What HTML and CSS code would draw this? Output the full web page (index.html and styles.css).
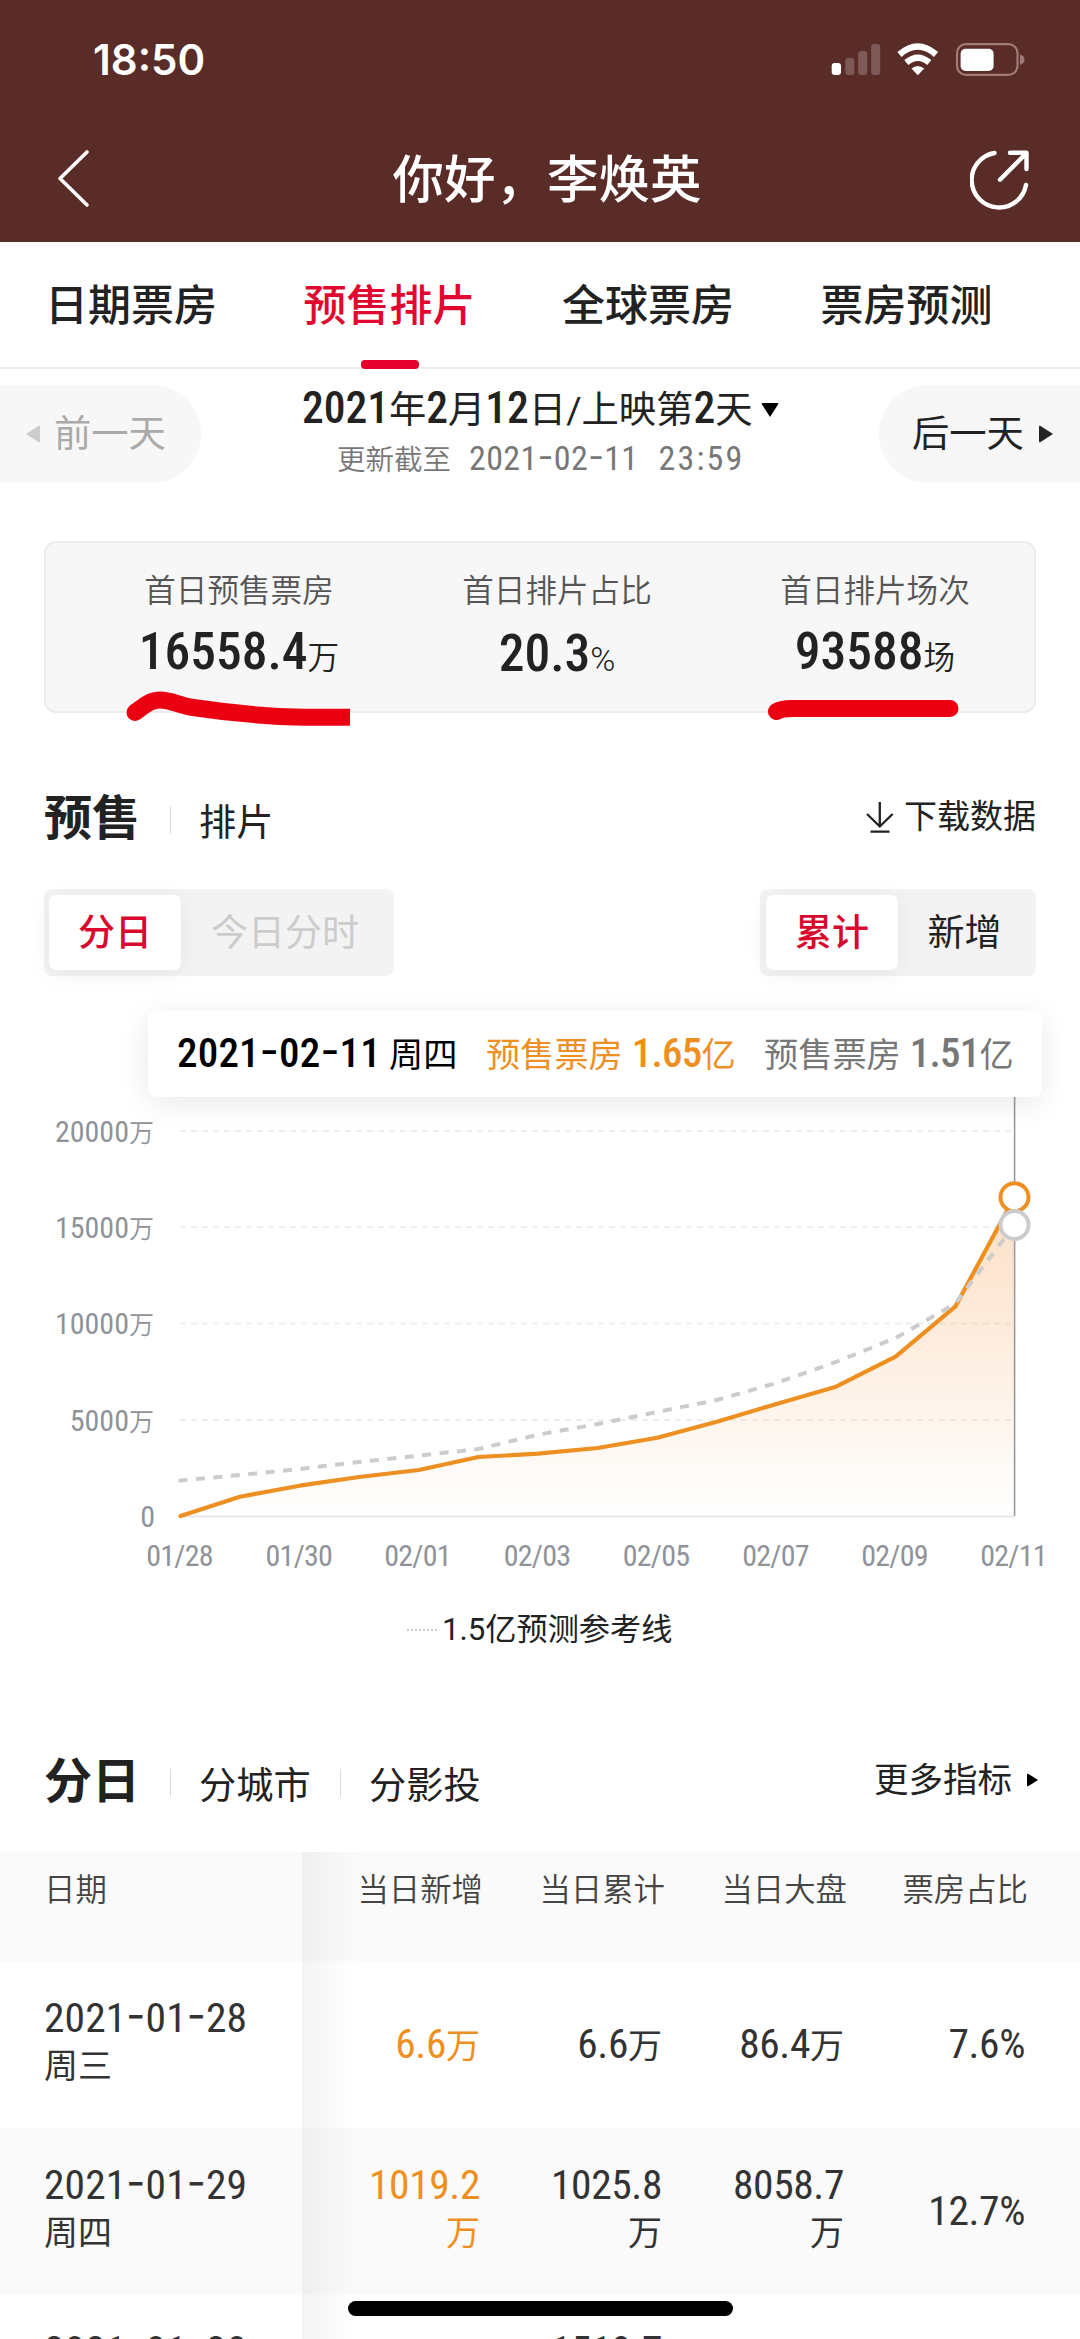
FILE: index.html
```
<!DOCTYPE html>
<html lang="zh-CN">
<head>
<meta charset="utf-8">
<title>你好，李焕英</title>
<link rel="stylesheet" href="styles.css">
</head>
<body>
<header class="top">
  <div class="status">
    <span class="clock">18:50</span>
    <svg class="status-icons" width="196" height="36" viewBox="830 40 196 36">
      <rect x="831.7" y="62" width="9.3" height="12" rx="3" fill="#fff"/>
      <g fill="#fff" opacity=".22">
        <rect x="845.3" y="57" width="9" height="17" rx="3"/>
        <rect x="858.2" y="50" width="9" height="24" rx="3"/>
        <rect x="871.2" y="43" width="9" height="31" rx="3"/>
      </g>
      <g fill="none" stroke="#fff" stroke-width="6.4">
        <path d="M899.5 53.5 Q917.8 37.5 936 53.5"/>
        <path d="M906.3 61.5 Q917.8 52 929.3 61.5"/>
      </g>
      <path d="M911.5 67.5 Q917.8 62.5 924.2 67.5 L917.8 74.2Z" fill="#fff"/>
      <rect x="957" y="43.2" width="60.5" height="30.6" rx="9" fill="none" stroke="#a07b78" stroke-width="2.2"/>
      <rect x="960.6" y="47.7" width="33" height="22.3" rx="5" fill="#fff"/>
      <path d="M1020 53.5 Q1024.5 55 1024.5 58.6 Q1024.5 62.5 1020 64Z" fill="#a07b78"/>
    </svg>
  </div>
  <div class="nav">
    <svg width="36" height="62" viewBox="56 148 36 62" fill="none" stroke="#fff" stroke-width="3.6" stroke-linecap="round" stroke-linejoin="round"><path d="M87 152 L60 178.5 L87 205"/></svg>
    <h1>你好，李焕英</h1>
    <svg width="62" height="62" viewBox="970 150 62 62" fill="none" stroke="#fff" stroke-width="4.4" stroke-linecap="round" stroke-linejoin="round">
      <path d="M994.5 155 A27.4 27.4 0 1 0 1026 187"/>
      <path d="M1000 181.7 L1026.5 155 M1010 154.8 H1026.5 V171"/>
    </svg>
  </div>
</header>

<nav class="tabs">
  <a>日期票房</a><a class="on">预售排片</a><a>全球票房</a><a>票房预测</a>
</nav>

<section class="day">
  <div class="pill prev"><i class="tri left"></i>前一天</div>
  <div class="day-mid">
    <div class="day-main"><b class="n">2021</b>年<b class="n">2</b>月<b class="n">12</b>日/上映第<b class="n">2</b>天<i class="tri down"></i></div>
    <div class="day-sub">更新截至 <span class="n">2021<s>-</s>02<s>-</s>11</span> <span class="n time">23:59</span></div>
  </div>
  <div class="pill next">后一天<i class="tri right"></i></div>
</section>

<section class="card">
  <div><p>首日预售票房</p><p class="val"><b>16558.4</b>万</p></div>
  <div><p>首日排片占比</p><p class="val"><b>20.3</b><span class="pct">%</span></p></div>
  <div><p>首日排片场次</p><p class="val"><b>93588</b>场</p></div>
  <svg class="marks" width="992" height="60" viewBox="44 680 992 60" fill="none" stroke="#eb0012" stroke-width="17">
    <path d="M135 712.5 C144 706 150 700 160 700 C171 700 178 705 193 707.5 C230 713 265 716.5 303 717.3 H350"/>
    <path d="M135 712.5 h.01 M776.5 711.5 Q782 708.5 792 708.5 H950" stroke-linecap="round"/>
  </svg>
</section>

<section class="head">
  <h2>预售</h2><span class="sep"></span><span class="alt">排片</span>
  <div class="more dl">
    <svg width="28" height="32" viewBox="867 800 28 32" fill="none" stroke="#222" stroke-width="2.3"><path d="M880.8 801 V825 M868 813 L880.8 825.5 L893.6 813 M871.5 830.6 H890.5"/></svg>下载数据
  </div>
</section>

<section class="segs">
  <div class="seg"><span class="on">分日</span><span class="off">今日分时</span></div>
  <div class="seg r"><span class="on">累计</span><span>新增</span></div>
</section>

<section class="chart">
  <div class="tip">
    <span class="t-date"><b class="n">2021<s>-</s>02<s>-</s>11</b>周四</span>
    <span class="t-a">预售票房<b class="n">1.65</b>亿</span>
    <span class="t-b">预售票房<b class="n">1.51</b>亿</span>
  </div>
  <svg class="plot" width="1080" height="483" viewBox="0 1097 1080 483">
    <defs><linearGradient id="fill" x1="0" y1="1197" x2="0" y2="1516" gradientUnits="userSpaceOnUse"><stop offset="0" stop-color="#f5923a" stop-opacity=".3"/><stop offset="1" stop-color="#f5923a" stop-opacity="0"/></linearGradient></defs>
    <path d="M180 1131H1014M180 1227.3H1014M180 1323.5H1014M180 1420H1014" stroke="#eee" stroke-width="2" stroke-dasharray="6 5"/>
    <path d="M180 1516.5H1014" stroke="#e3e3e6" stroke-width="1.5"/>
    <path fill="url(#fill)" d="M180.5 1516L240 1496.7 299.6 1485.7 359.2 1477 418.8 1470 478.4 1457 538 1453.7 597.6 1448 657.2 1437.7 716.8 1421.7 776.4 1404 836 1386.7 895.6 1356.7 955.2 1306.7 1014.5 1197V1516Z"/>
    <path d="M1014.6 1097V1516" stroke="#9b9b9b" stroke-width="1.6"/>
    <path fill="none" stroke="#ee9021" stroke-width="4.2" stroke-linejoin="round" stroke-linecap="round" d="M180.5 1516L240 1496.7 299.6 1485.7 359.2 1477 418.8 1470 478.4 1457 538 1453.7 597.6 1448 657.2 1437.7 716.8 1421.7 776.4 1404 836 1386.7 895.6 1356.7 955.2 1306.7 1014.5 1197"/>
    <path fill="none" stroke="#ccc" stroke-width="4" stroke-dasharray="9 8.5" d="M178.5 1480.7L240 1475 299.6 1469 359.2 1462 418.8 1455.7 478.4 1449 538 1434.7 597.6 1424 657.2 1412 716.8 1400 776.4 1383 836 1362 895.6 1338 955.2 1303.5 1014.5 1225"/>
    <circle cx="1014.5" cy="1197.3" r="14" fill="#fff" stroke="#ee9021" stroke-width="4"/>
    <circle cx="1014.5" cy="1225" r="14" fill="#fff" stroke="#ccc" stroke-width="4"/>
    <g class="axis" text-anchor="end">
      <text x="154" y="1141.5">20000<tspan class="w">万</tspan></text>
      <text x="154" y="1238">15000<tspan class="w">万</tspan></text>
      <text x="154" y="1334">10000<tspan class="w">万</tspan></text>
      <text x="154" y="1430.5">5000<tspan class="w">万</tspan></text>
      <text x="155" y="1527">0</text>
    </g>
    <g class="axis dates" text-anchor="middle">
      <text x="179.5" y="1566">01/28</text><text x="298.8" y="1566">01/30</text><text x="417.5" y="1566">02/01</text><text x="537" y="1566">02/03</text><text x="656" y="1566">02/05</text><text x="775.5" y="1566">02/07</text><text x="894.5" y="1566">02/09</text><text x="1013.5" y="1566">02/11</text>
    </g>
  </svg>
  <div class="legend"><i></i>1.5亿预测参考线</div>
</section>

<section class="head second">
  <h2>分日</h2><span class="sep"></span><span class="alt">分城市</span><span class="sep"></span><span class="alt">分影投</span>
  <div class="more">更多指标<i class="tri right"></i></div>
</section>

<section class="table">
  <div class="row th"><span>日期</span><span>当日新增</span><span>当日累计</span><span>当日大盘</span><span>票房占比</span></div>
  <div class="row"><span><em>2021<s>-</s>01<s>-</s>28</em><br>周三</span><span class="o one"><em>6.6</em>万</span><span class="one"><em>6.6</em>万</span><span class="one"><em>86.4</em>万</span><span class="one"><em>7.6%</em></span></div>
  <div class="row band"><span><em>2021<s>-</s>01<s>-</s>29</em><br>周四</span><span class="o"><em>1019.2</em><br>万</span><span><em>1025.8</em><br>万</span><span><em>8058.7</em><br>万</span><span class="one"><em>12.7%</em></span></div>
  <div class="row last"><span><em>2021<s>-</s>01<s>-</s>30</em></span><span></span><span><em>1519.7</em></span><span></span><span></span></div>
  <div class="edge"></div>
</section>
<div class="home"></div>
</body>
</html>
```
FILE: styles.css
```
* { box-sizing: border-box; margin: 0; padding: 0; }
html, body { width: 1080px; height: 2339px; overflow: hidden; }
body {
  position: relative;
  background: #fff;
  color: #222;
  font-family: Roboto, "Noto Sans CJK SC", sans-serif;
  display: flex;
  flex-direction: column;
}
body > * { flex: none; }
b, em, .n { font-style: normal; font-weight: 460; font-stretch: 75%; line-height: 0; }
s { font-family: Inter, sans-serif; text-decoration: none; font-feature-settings: "case"; }
.tri { display: block; width: 0; height: 0; border: solid transparent; }
.tri.right { border-width: 9px 0 9px 14px; border-left-color: currentColor; border-radius: 2px; }
.tri.left { border-width: 9px 14px 9px 0; border-right-color: #ccc; border-radius: 2px; }
.tri.down { border-width: 14px 9.5px 0; border-top-color: #000; border-radius: 2px; }

/* header */
.top { height: 242px; background: #592c28; color: #fff; }
.status { height: 118px; padding: 0 54px 0 93px; display: flex; justify-content: space-between; align-items: center; }
.clock { font: 600 42px/50px Inter, sans-serif; padding-top: 1px; }
.nav { height: 122px; padding: 0 48px 0 56px; display: flex; justify-content: space-between; align-items: center; }
.nav h1 { font-size: 51.5px; line-height: 60px; font-weight: 500; padding: 4px 0 0 32px; }

/* tabs */
.tabs { height: 127px; border-bottom: 2px solid #eee; padding: 0 45px; display: flex; gap: 86.5px; font-size: 43px; font-weight: 500; line-height: 128px; white-space: nowrap; }
.tabs a { height: 127px; flex: none; width: 172px; }
.tabs .on { color: #e0082f; display: flex; flex-direction: column; align-items: center; }
.tabs .on::after { content: ""; width: 58px; height: 9px; border-radius: 4px; background: #e6002d; margin-top: -10px; flex: none; }

/* day picker */
.day { height: 114px; padding-top: 16px; display: flex; justify-content: space-between; }
.pill { width: 201px; height: 98px; background: #f7f7f7; display: flex; align-items: center; font-size: 37.3px; line-height: 98px; }
.prev { border-radius: 0 49px 49px 0; padding-left: 26px; gap: 14px; color: #aaa; }
.next { border-radius: 49px 0 0 49px; padding-left: 33px; gap: 15px; }
.day-mid { flex: 1; }
.day-main { display: flex; align-items: baseline; margin-left: 101px; font-size: 37.3px; line-height: 50px; white-space: nowrap; }
.day-main .n { font-size: 43.5px; }
.day-main .tri { margin-left: 9px; align-self: center; }
.day-sub { margin: 2px 0 0 136px; font-size: 28.5px; line-height: 48px; color: #777; white-space: pre; font-weight: 350; word-spacing: 11px; }
.day-sub .n { font-size: 34px; font-weight: 400; letter-spacing: .4px; }
.day-sub .time { letter-spacing: 2.2px; margin-left: 2px; }

/* summary card */
.card { position: relative; margin: 58px 44px 0; height: 172px; border: 2px solid #ededed; border-radius: 12px; background: #f7f7f7; display: flex; padding: 27px 0 0 34px; }
.card > div { width: 318px; text-align: center; white-space: nowrap; }
.card p { font-size: 31.6px; line-height: 44px; color: #555; font-weight: 350; }
.card .val { color: #222; line-height: 72px; margin-top: 9px; }
.val b { font-size: 51.5px; font-stretch: 79%; font-weight: 500; }
.pct { font-size: 34px; }
.marks { position: absolute; left: -2px; top: 137px; }

/* section headings */
.head { height: 60px; margin-top: 74px; padding: 0 44px; display: flex; align-items: center; white-space: nowrap; }
.head h2 { font-size: 48px; line-height: 60px; font-weight: 700; width: 126px; padding-top: 3px; }
.sep { width: 1px; height: 28px; background: #ddd; margin-top: 6px; }
.alt { font-size: 37.2px; }
.head .alt { margin: 6px 29.5px 0 28px; }
.more { margin-left: auto; font-size: 33px; line-height: 50px; display: flex; align-items: center; gap: 10px; }
.second .more { font-size: 34.5px; gap: 15px; margin-right: -2px; }
.second .more .tri { border-width: 7px 0 7px 11px; color: #000; }

/* segmented switches */
.segs { margin-top: 42px; padding: 0 44px; display: flex; justify-content: space-between; }
.seg { width: 350px; height: 87px; border-radius: 8px; background: #f3f3f3; padding: 6px 5px; display: flex; font-size: 37px; line-height: 77px; }
.seg.r { width: 276px; padding-left: 6px; }
.seg span { flex: 1; text-align: center; }
.seg .on { flex: none; width: 132px; height: 75px; border-radius: 7px; background: #fff; color: #d9082f; font-weight: 500; box-shadow: 0 4px 24px rgba(0,0,0,.06); }
.seg .off { color: #ccc; }

/* chart */
.chart { margin-top: 35px; height: 676px; }
.tip { position: relative; margin-left: 148px; width: 894px; height: 86px; border-radius: 8px; background: #fff; box-shadow: 0 6px 30px rgba(0,0,0,.09); padding: 1px 0 0 29px; display: flex; font-size: 34.2px; line-height: 86px; white-space: nowrap; }
.tip .n { font-size: 41px; }
.t-date { color: #000; width: 309px; }
.t-date .n { letter-spacing: .2px; margin-right: 8px; font-weight: 500; }
.t-a { color: #ee9021; width: 278px; }
.t-b { color: #777; }
.t-a .n, .t-b .n { margin-left: 9px; letter-spacing: -.8px; font-weight: 500; }
.plot { display: block; }
.axis { font-size: 30px; font-stretch: 75%; fill: #8f9399; }
.dates { letter-spacing: -.8px; }
.axis .w { font-size: 25px; font-weight: 350; }
.legend { height: 50px; margin-top: 25px; padding-left: 407px; display: flex; align-items: center; font-size: 31.2px; line-height: 50px; }
.legend i { width: 30px; border-top: 2px dotted #ccc; margin-right: 5px; }

/* table */
.second { margin-top: 63px; }
.table { position: relative; margin-top: 42px; height: 487px; overflow: hidden; }
.row { height: 167px; display: grid; grid-template-columns: 302px 178px 182px 182px 181px; align-items: center; font-size: 34px; line-height: 46px; color: #333; text-align: right; }
.row span { padding-bottom: 3px; }
.row .one { padding: 3px 0 0; }
.row span:first-child { text-align: left; padding-left: 44px; }
.row em { font-size: 41.5px; font-weight: 400; letter-spacing: -.4px; }
.row span:first-child em { letter-spacing: .1px; }
.row .o { color: #ee9021; }
.band { background: #fafafa; }
.row.last { height: 44px; align-items: start; padding-top: 35px; }
.row.th { height: 109px; background: #fafafa; font-size: 31.4px; font-weight: 350; color: #444; align-items: start; padding-top: 16px; grid-template-columns: 302px 181px 182px 182px 181px; }
.edge { position: absolute; left: 302px; top: 0; width: 55px; height: 100%; background: linear-gradient(90deg, rgba(0,0,0,.045), rgba(0,0,0,0)); }

.home { position: absolute; left: 348px; top: 2301px; width: 385px; height: 15px; border-radius: 8px; background: #000; }
```
